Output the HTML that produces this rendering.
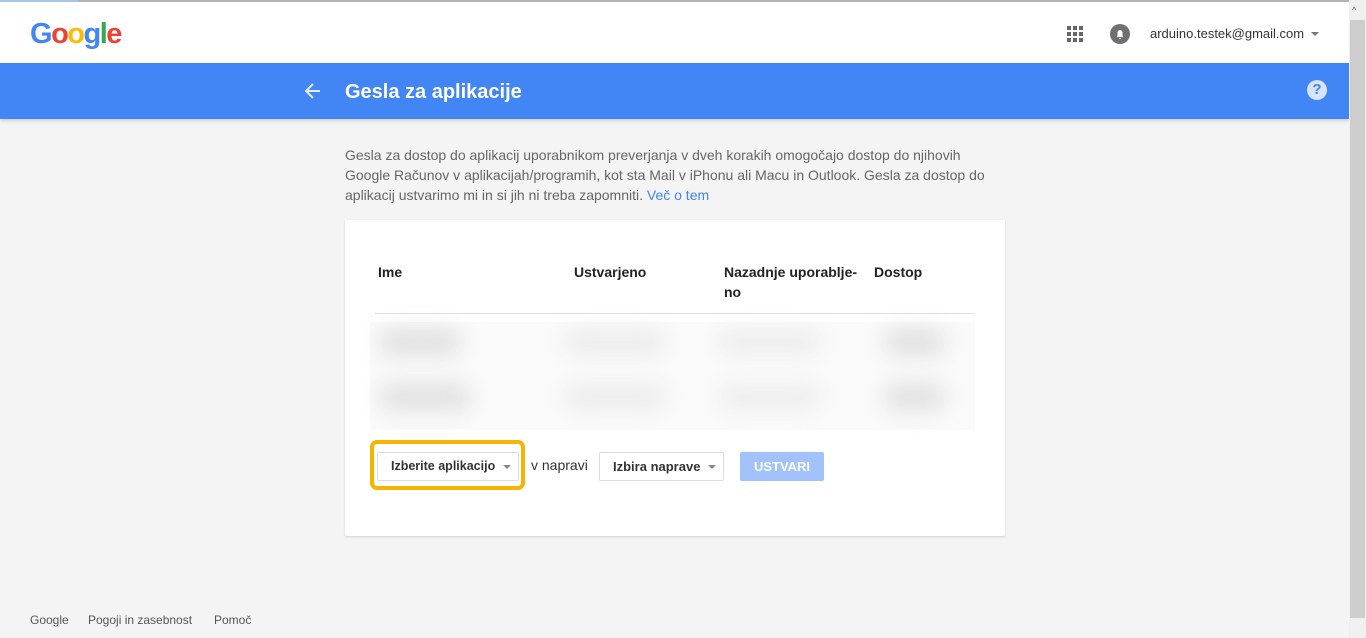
<!DOCTYPE html>
<html><head><meta charset="utf-8">
<style>
*{box-sizing:border-box;margin:0;padding:0}
body{width:1366px;height:638px;overflow:hidden;background:#f4f4f4;font-family:"Liberation Sans",Arial,sans-serif;position:relative}
.top{position:absolute;left:0;top:0;width:1349px;height:63px;background:#fff;border-top:2px solid #b4b4b4}
.topbar{position:absolute;left:0;top:0;width:78px;height:2px;background:#a8c4e8}
.logo{position:absolute;left:30px;top:17px;font-size:29px;letter-spacing:-1.5px;font-weight:bold;font-family:"Liberation Sans",sans-serif;line-height:34px}
.blue{position:absolute;left:0;top:63px;width:1349px;height:56px;background:#4285f4;box-shadow:0 2px 3px rgba(0,0,0,.15)}
.title{position:absolute;left:345px;top:81px;color:#fff;font-size:20px;font-weight:bold}
.arrow{position:absolute;left:303px;top:81px}
.help{position:absolute;left:1307px;top:80px;width:20px;height:20px;border-radius:50%;background:#d6e4fc;color:#4285f4;font-weight:bold;font-size:15px;text-align:center;line-height:20px}
.scroll{position:absolute;left:1349px;top:0;width:17px;height:638px;background:#f0f0f0}
.thumb{position:absolute;left:1350px;top:20px;width:15px;height:598px;background:#cdcdcd}
.desc{position:absolute;left:345px;top:145px;width:660px;font-size:14px;line-height:20px;color:#666}
.desc a{color:#4285f4;text-decoration:none}
.card{position:absolute;left:345px;top:220px;width:660px;height:316px;background:#fff;border-radius:2px;box-shadow:0 1px 2px rgba(0,0,0,.15)}
.th{position:absolute;font-size:14px;font-weight:bold;color:#222;line-height:20px;white-space:nowrap}
.blob{position:absolute;background:#e2e2e2;border-radius:10px;filter:blur(10px)}
.btn{position:absolute;height:29px;border:1px solid #ddd;border-radius:2px;background:#fff;font-size:13px;font-weight:bold;color:#333;line-height:27px;padding-left:13px;white-space:nowrap}
.caret{position:absolute;right:7px;top:12px;width:0;height:0;border-left:4px solid transparent;border-right:4px solid transparent;border-top:4px solid #888}
</style></head><body>
<div class="top"></div><div class="topbar"></div>
<div class="logo"><span style="color:#4285f4">G</span><span style="color:#ea4335">o</span><span style="color:#fbbc05">o</span><span style="color:#4285f4">g</span><span style="color:#34a853">l</span><span style="color:#ea4335">e</span></div>
<svg style="position:absolute;left:1067px;top:26px" width="16" height="16" fill="#666"><rect x="0" y="0" width="4" height="4"/><rect x="6" y="0" width="4" height="4"/><rect x="12" y="0" width="4" height="4"/><rect x="0" y="6" width="4" height="4"/><rect x="6" y="6" width="4" height="4"/><rect x="12" y="6" width="4" height="4"/><rect x="0" y="12" width="4" height="4"/><rect x="6" y="12" width="4" height="4"/><rect x="12" y="12" width="4" height="4"/></svg>
<svg style="position:absolute;left:1110px;top:24px" width="20" height="20"><circle cx="10" cy="10" r="10" fill="#707070"/><path d="M6.5 13 h7 l-1-1.5 v-3 a2.5 2.5 0 0 0-5 0 v3z M9 14 h2 a1 1 0 0 1-2 0z" fill="#fff"/></svg>
<div style="position:absolute;left:1150px;top:26px;font-size:13px;color:#333">arduino.testek@gmail.com</div>
<div style="position:absolute;left:1311px;top:32px;border-left:4px solid transparent;border-right:4px solid transparent;border-top:4px solid #777"></div>
<div class="blue"></div>
<svg class="arrow" width="20" height="20"><path d="M17 10 H4 M10 3 L3 10 L10 17" stroke="#fff" stroke-width="2" fill="none" opacity=".85"/></svg>
<div class="title">Gesla za aplikacije</div>
<div class="help">?</div>
<div class="scroll"></div><div class="thumb"></div>
<div style="position:absolute;left:1352px;top:5px;font-size:9px;color:#555">^</div>
<div class="desc">Gesla za dostop do aplikacij uporabnikom preverjanja v dveh korakih omogočajo dostop do njihovih Google Računov v aplikacijah/programih, kot sta Mail v iPhonu ali Macu in Outlook. Gesla za dostop do aplikacij ustvarimo mi in si jih ni treba zapomniti. <a>Več o tem</a></div>
<div class="card">
<div class="th" style="left:33px;top:42px">Ime</div>
<div class="th" style="left:229px;top:42px">Ustvarjeno</div>
<div class="th" style="left:379px;top:42px">Nazadnje uporablje-<br>no</div>
<div class="th" style="left:529px;top:42px">Dostop</div>
<div style="position:absolute;left:30px;top:93px;width:600px;height:1px;background:#ddd"></div>
<div style="position:absolute;left:25px;top:102px;width:605px;height:108px;background:#fafafa"></div>
<div class="blob" style="left:35px;top:108px;width:80px;height:28px"></div>
<div class="blob" style="left:220px;top:110px;width:100px;height:24px;background:#ececec"></div>
<div class="blob" style="left:375px;top:110px;width:100px;height:24px;background:#ededed"></div>
<div class="blob" style="left:540px;top:108px;width:60px;height:28px"></div>
<div class="blob" style="left:35px;top:163px;width:90px;height:28px"></div>
<div class="blob" style="left:220px;top:165px;width:100px;height:24px;background:#ececec"></div>
<div class="blob" style="left:375px;top:165px;width:100px;height:24px;background:#ededed"></div>
<div class="blob" style="left:540px;top:163px;width:60px;height:28px"></div>
</div>
<div style="position:absolute;left:370px;top:440px;width:155px;height:50px;border:4px solid #f4b400;border-radius:7px"></div>
<div class="btn" style="left:377px;top:452px;width:142px;font-size:12.5px">Izberite aplikacijo<div class="caret"></div></div>
<div style="position:absolute;left:531px;top:457px;font-size:14px;color:#333">v napravi</div>
<div class="btn" style="left:599px;top:452px;width:125px">Izbira naprave<div class="caret"></div></div>
<div style="position:absolute;left:740px;top:452px;width:84px;height:29px;background:#a1c2fa;border-radius:2px;color:#fff;font-size:13px;font-weight:bold;text-align:center;line-height:29px">USTVARI</div>
<div style="position:absolute;left:30px;top:613px;font-size:12px;color:#555">Google</div>
<div style="position:absolute;left:88px;top:613px;font-size:12px;color:#555">Pogoji in zasebnost</div>
<div style="position:absolute;left:214px;top:613px;font-size:12px;color:#555">Pomoč</div>
</body></html>
